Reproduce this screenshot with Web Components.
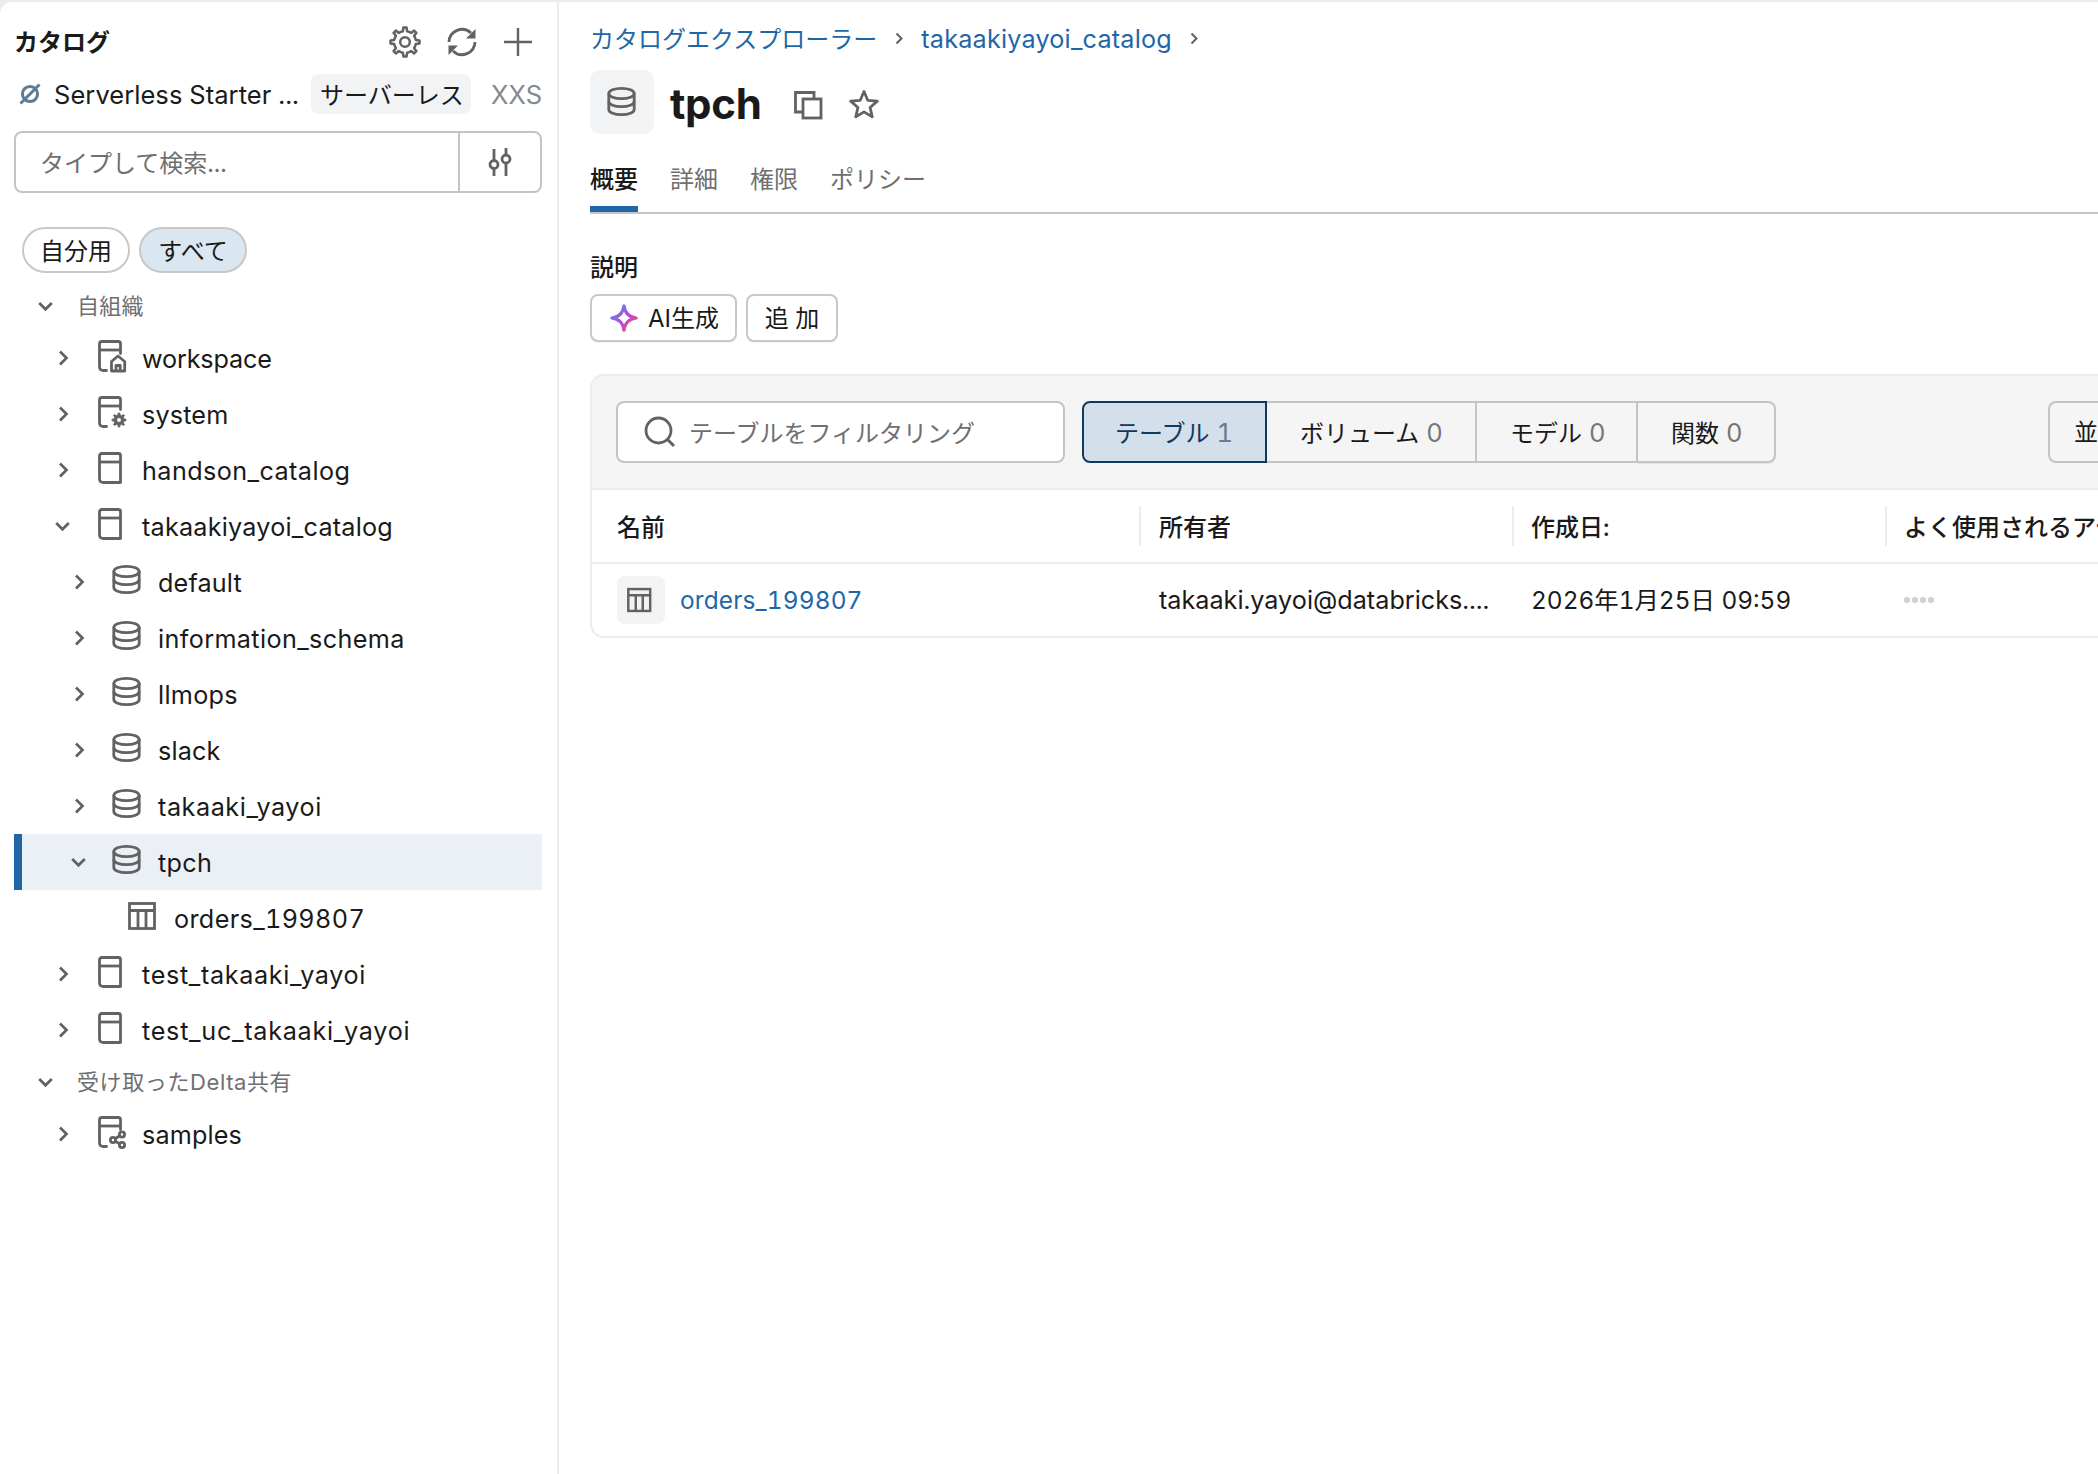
<!DOCTYPE html>
<html lang="ja">
<head>
<meta charset="utf-8">
<title>tpch</title>
<style>
html,body{margin:0;padding:0;height:100%;background:#fff;overflow:hidden}
</style>
</head>
<body>
<db-app>
  <db-sidebar slot="side">
    <side-header title-text="カタログ"></side-header>
    <cluster-row name="Serverless Starter ..." badge="サーバーレス" size="XXS"></cluster-row>
    <search-box placeholder="タイプして検索..."></search-box>
    <pill-group>
      <filter-pill>自分用</filter-pill>
      <filter-pill active>すべて</filter-pill>
    </pill-group>
    <tree-section first>自組織</tree-section>
    <tree-row depth="0" icon="catalog-home" style="--ls:-.15px">workspace</tree-row>
    <tree-row depth="0" icon="catalog-gear">system</tree-row>
    <tree-row depth="0" icon="catalog" style="--ls:.42px">handson_catalog</tree-row>
    <tree-row depth="0" icon="catalog" open style="--ls:.22px">takaakiyayoi_catalog</tree-row>
    <tree-row depth="1" icon="db">default</tree-row>
    <tree-row depth="1" icon="db" style="--ls:.37px">information_schema</tree-row>
    <tree-row depth="1" icon="db" style="--ls:.3px">llmops</tree-row>
    <tree-row depth="1" icon="db">slack</tree-row>
    <tree-row depth="1" icon="db" style="--ls:.55px">takaaki_yayoi</tree-row>
    <tree-row depth="1" icon="db" open selected style="--ls:.3px">tpch</tree-row>
    <tree-row depth="2" icon="table" leaf style="--ls:.35px">orders_199807</tree-row>
    <tree-row depth="0" icon="catalog" style="--ls:.65px">test_takaaki_yayoi</tree-row>
    <tree-row depth="0" icon="catalog" style="--ls:.72px">test_uc_takaaki_yayoi</tree-row>
    <tree-section wide>受け取ったDelta共有</tree-section>
    <tree-row depth="0" icon="catalog-share">samples</tree-row>
  </db-sidebar>
  <db-main slot="main">
    <bread-crumbs></bread-crumbs>
    <page-title>tpch</page-title>
    <tab-bar></tab-bar>
    <desc-block></desc-block>
    <asset-card></asset-card>
  </db-main>
</db-app>
<script>
(function(){
const INK='#626262';
function gear(cx,cy,R,r,n){
  let d='';
  const step=Math.PI*2/n;
  for(let i=0;i<n;i++){
    const a=i*step-Math.PI/2;
    const p=[[a-step*.5,r],[a-step*.24,r],[a-step*.14,R],[a+step*.14,R],[a+step*.24,r]];
    p.forEach((q,j)=>{
      const x=(cx+q[1]*Math.cos(q[0])).toFixed(2),y=(cy+q[1]*Math.sin(q[0])).toFixed(2);
      d+=(i===0&&j===0?'M':'L')+x+' '+y;
    });
  }
  return d+'Z';
}
function star(cx,cy,R,r){
  let d='';
  for(let i=0;i<10;i++){
    const a=-Math.PI/2+i*Math.PI/5,m=i%2?r:R;
    d+=(i?'L':'M')+(cx+m*Math.cos(a)).toFixed(2)+' '+(cy+m*Math.sin(a)).toFixed(2);
  }
  return d+'Z';
}
const S=`fill="none" stroke="${INK}" stroke-width="2.8"`;
const catalogBase='M3.5 10H24.5';
const ICONS={
  catalog:[32,`<path ${S} stroke-linejoin="round" d="M6 1.5H22.5Q24.5 1.5 24.5 3.5V30.5H7.5Q3.5 30.5 3.5 26.5V4Q3.5 1.5 6 1.5Z"/><path ${S} d="${catalogBase}"/>`],
  'catalog-home':[32,`<path ${S} stroke-linecap="round" d="M24.5 13.5V3.5Q24.5 1.5 22.5 1.5H6Q3.5 1.5 3.5 4V26.5Q3.5 30.5 7.5 30.5H10.5"/><path ${S} d="${catalogBase}"/><path ${S} stroke-linejoin="round" d="M15.5 31V21.5L22 16L28.7 21.5V31ZM20 31V25.5H24.2V31"/>`],
  'catalog-gear':[32,`<path ${S} stroke-linecap="round" d="M24.5 13.5V3.5Q24.5 1.5 22.5 1.5H6Q3.5 1.5 3.5 4V26.5Q3.5 30.5 7.5 30.5H10.5"/><path ${S} d="${catalogBase}"/><path fill="${INK}" stroke="${INK}" stroke-width="1" stroke-linejoin="round" fill-rule="evenodd" d="${gear(23,24,7,5,8)}M23 21.6a2.4 2.4 0 1 0 .01 0Z"/>`],
  'catalog-share':[32,`<path ${S} stroke-linecap="round" d="M24.5 13.5V3.5Q24.5 1.5 22.5 1.5H6Q3.5 1.5 3.5 4V26.5Q3.5 30.5 7.5 30.5H10.5"/><path ${S} d="${catalogBase}"/><circle ${S} cx="26" cy="18.5" r="2.6"/><circle ${S} cx="17" cy="24" r="2.6"/><circle ${S} cx="26" cy="29" r="2.6"/><path ${S} d="M19 22.7L23.8 19.8M19 25.2L23.8 27.8"/>`],
  db:[32,`<ellipse ${S} cx="14.5" cy="7.5" rx="12.7" ry="5.2"/><path ${S} d="M1.8 7.5V23.5C1.8 26.6 7.5 28.7 14.5 28.7S27.2 26.6 27.2 23.5V7.5"/><path ${S} d="M1.8 15.5C1.8 18.6 7.5 20.7 14.5 20.7S27.2 18.6 27.2 15.5"/>`],
  table:[32,`<rect ${S} x="1.5" y="3.5" width="25" height="25"/><path ${S} d="M1.5 10.5H26.5M10 10.5V28.5M18 10.5V28.5"/>`],
  gear:[32,`<path fill="none" stroke="${INK}" stroke-width="2.5" stroke-linejoin="round" d="${gear(16,16,14.6,11,8)}"/><circle cx="16" cy="16" r="4.8" fill="none" stroke="${INK}" stroke-width="2.5"/>`],
  refresh:[32,`<path ${S} d="M3 16A13 13 0 0 1 25 7M29 16A13 13 0 0 1 7 25"/><path fill="${INK}" d="M29.5 3V12.5H20Z M2.5 29V19.5H12Z"/>`],
  plus:[32,`<path fill="none" stroke="${INK}" stroke-width="2.4" d="M16 2V30M2 16H30"/>`],
  slash:[22,`<circle cx="11" cy="11" r="7.6" fill="none" stroke="#5f7a92" stroke-width="3"/><path stroke="#5f7a92" stroke-width="3" d="M1.5 20.5L20.5 1.5"/>`],
  filter:[32,`<path ${S} d="M10 3V14M10 23V30M22 2V8.5M22 17.5V30"/><circle ${S} cx="10" cy="18.5" r="4"/><circle ${S} cx="22" cy="13" r="4"/>`],
  search:[32,`<circle cx="14.5" cy="14.5" r="12.5" fill="none" stroke="${INK}" stroke-width="2.8"/><path stroke="${INK}" stroke-width="3" d="M23.5 23.5L30 30"/>`],
  copy:[30,`<path ${S} d="M10 22H2.5V2.5H21V9"/><rect ${S} x="10" y="9" width="18" height="19"/>`],
  star:[32,`<path ${S} stroke-linejoin="round" d="${star(16,16.5,14,6.4)}"/>`],
  spark:[32,`<defs><linearGradient id="g" x1="0" y1="0" x2="1" y2="1"><stop offset="0" stop-color="#4299e0"/><stop offset=".5" stop-color="#b44ae0"/><stop offset="1" stop-color="#ff4b5c"/></linearGradient></defs><path fill="none" stroke="url(#g)" stroke-width="3.4" stroke-linejoin="round" d="M16 3C17 11 21 15 29 16C21 17 17 21 16 29C15 21 11 17 3 16C11 15 15 11 16 3Z"/>`]
};
function staticEl(name,html){
  customElements.define(name,class extends HTMLElement{
    constructor(){super();this.attachShadow({mode:'open'}).innerHTML=html;}
  });
}
function dynEl(name,render){
  customElements.define(name,class extends HTMLElement{
    constructor(){super();this.attachShadow({mode:'open'});}
    connectedCallback(){this.shadowRoot.innerHTML=render(this);}
  });
}
dynEl('db-icon',h=>{
  const I=ICONS[h.getAttribute('name')]||ICONS.db,s=+(h.getAttribute('size')||I[0]);
  return `<style>:host{display:inline-flex;flex:none;width:${s}px;height:${s}px}svg{display:block;overflow:visible}</style><svg width="${s}" height="${s}" viewBox="0 0 ${I[0]} ${I[0]}">${I[1]}</svg>`;
});
dynEl('db-chevron',h=>{
  const open=h.hasAttribute('open');
  const d=open?'M2.2 3L8.5 9.3L14.8 3':'M3 1.5L9.5 8L3 14.5';
  return `<style>:host{display:inline-flex;width:${open?17:13}px;height:${open?12:16}px;flex:none}svg{display:block}</style><svg width="${open?17:13}" height="${open?12:16}"><path fill="none" stroke="${INK}" stroke-width="2.7" d="${d}"/></svg>`;
});
staticEl('db-app',`<style>
:host{display:flex;width:2098px;height:1474px;box-sizing:border-box;padding-top:2px;overflow:hidden;background:#e9edf1;color:#1a1a1a;font:24px/32px Inter,"Noto Sans CJK JP",sans-serif;font-variant-numeric:tabular-nums}
</style><slot name="side"></slot><slot name="main"></slot>`);
staticEl('db-sidebar',`<style>
:host{display:block;flex:none;width:559px;box-sizing:border-box;height:100%;padding:0 15px 0 14px;background:#fff;border-right:2px solid #e9edf1;border-top-left-radius:12px}
</style><slot></slot>`);
dynEl('side-header',h=>`<style>
:host{display:flex;align-items:center;height:40px;margin-top:20px}
h2{flex:1;margin:0;font-size:24px;font-weight:700;line-height:43px}
</style><h2>${h.getAttribute('title-text')}</h2><db-icon name="gear" size="32" style="margin-right:-1px"></db-icon><db-icon style="margin-left:26px" name="refresh" size="32"></db-icon><db-icon style="margin-left:24px" name="plus" size="32"></db-icon><span style="width:8px"></span>`);
dynEl('cluster-row',h=>`<style>
:host{display:flex;align-items:center;height:40px;margin-top:12px}
db-icon{margin-left:5px}
.n{margin-left:13px;width:257px;white-space:nowrap;font-size:25.5px;letter-spacing:.05px;line-height:43px}
.b{background:#f2f3f5;border-radius:8px;height:40px;line-height:43px;padding:0 9px;box-sizing:border-box;width:160px;text-align:center;white-space:nowrap}
.s{margin-left:auto;color:#85898d;font-size:25.5px;line-height:43px}
</style><db-icon name="slash" size="22"></db-icon><span class="n">${h.getAttribute('name')}</span><span class="b">${h.getAttribute('badge')}</span><span class="s">${h.getAttribute('size')}</span>`);
dynEl('search-box',h=>`<style>
:host{display:flex;align-items:stretch;height:62px;box-sizing:border-box;margin-top:17px;border:2px solid #c4c4c4;border-radius:8px}
.p{flex:1;padding-left:24px;line-height:61px;color:#6f6f6f}
.f{width:80px;border-left:2px solid #c4c4c4;display:flex;align-items:center;justify-content:center}
</style><span class="p">${h.getAttribute('placeholder')}</span><span class="f"><db-icon name="filter" size="32"></db-icon></span>`);
staticEl('pill-group',`<style>:host{display:flex;gap:9px;margin-top:34px;padding-left:8px}</style><slot></slot>`);
staticEl('filter-pill',`<style>
:host{display:block;width:108px;height:46px;box-sizing:border-box;border:2px solid #c8c8c8;border-radius:23px;text-align:center;line-height:45px;font-size:24px;background:#fff}
:host([active]){background:#dae6f0}
</style><slot></slot>`);
staticEl('tree-section',`<style>
:host{display:flex;align-items:center;height:48px;padding-left:23px;font-size:22px;color:#6f6f6f;white-space:nowrap}
:host([first]){margin-top:9px}
.t{margin-left:23px;line-height:34px;letter-spacing:.25px}
:host([wide]) .t{letter-spacing:.6px}
</style><db-chevron open></db-chevron><span class="t"><slot></slot></span>`);
dynEl('tree-row',h=>{
  const depth=+h.getAttribute('depth'),open=h.hasAttribute('open'),leaf=h.hasAttribute('leaf');
  const chev=leaf?'':`<db-chevron ${open?'open':''}></db-chevron>`;
  return `<style>
  :host{display:flex;align-items:center;height:56px;box-sizing:border-box;white-space:nowrap;padding-left:${35+depth*16}px}
  :host([selected]){background:#eaf0f6;box-shadow:inset 8px 0 0 #1f66a9}
  .c{width:28px;display:flex;justify-content:center;flex:none}
  .c db-chevron[open]{margin-left:-2px}
  db-icon{margin-left:19px;margin-bottom:4px}
  .t{margin-left:14px;font-size:25.2px;letter-spacing:var(--ls,.15px);line-height:34px;padding-top:1px}
  </style><span class="c">${chev}</span><db-icon name="${h.getAttribute('icon')}" size="32"></db-icon><span class="t"><slot></slot></span>`;
});
staticEl('db-main',`<style>
:host{display:block;flex:1;min-width:0;height:100%;box-sizing:border-box;padding-left:31px;background:#fff;overflow:hidden}
</style><slot></slot>`);
const crumb=`<svg width="8" height="13"><path fill="none" stroke="#626262" stroke-width="2" d="M1.5 1.5L6.5 6.5L1.5 11.5"/></svg>`;
staticEl('bread-crumbs',`<style>
:host{display:flex;align-items:center;height:36px;margin-top:18px;color:#1f66a9;white-space:nowrap;line-height:35px}
svg{display:block;margin:0 18px}
svg:last-child{margin-right:0}
span{padding-top:3px}
span.l{font-size:25.2px;letter-spacing:.2px;padding-top:2px}
</style><span>カタログエクスプローラー</span>${crumb}<span class="l">takaakiyayoi_catalog</span>${crumb}`);
staticEl('page-title',`<style>
:host{display:flex;align-items:center;height:64px;margin-top:14px}
.b{width:64px;height:64px;border-radius:10px;background:#f2f3f5;display:flex;align-items:center;justify-content:center}
.b db-icon{margin-left:2px}
h1{margin:0 31px 0 16px;font-size:42px;font-weight:700;line-height:68px;height:64px;letter-spacing:-.3px}
.i{margin-top:5px}
</style><span class="b"><db-icon name="db" size="32"></db-icon></span><h1><slot></slot></h1><db-icon class="i" name="copy" size="30"></db-icon><db-icon class="i" name="star" size="32" style="margin-left:25px"></db-icon>`);
staticEl('tab-bar',`<style>
:host{display:flex;gap:32px;height:66px;box-sizing:border-box;margin-top:14px;border-bottom:2px solid #c5c5c5;align-items:flex-start}
span{display:block;height:64px;box-sizing:border-box;padding-top:16px;color:#6f6f6f;line-height:32px}
.a{color:#1a1a1a;font-weight:500;border-bottom:6px solid #1f66a9}
</style><span class="a">概要</span><span>詳細</span><span>権限</span><span>ポリシー</span>`);
staticEl('desc-block',`<style>
:host{display:block}
.h{margin-top:38px;height:30px;line-height:31px;font-weight:500}
.r{display:flex;gap:9px;margin-top:12px}
.btn{display:flex;align-items:center;height:48px;box-sizing:border-box;border:2px solid #c8c8c8;border-radius:8px;padding:0 0 0 17px;line-height:35px;white-space:nowrap;background:#fff;box-shadow:0 1px 1px rgba(0,0,0,.05)}
.btn db-icon{margin-right:9px}
</style><div class="h">説明</div><div class="r"><span class="btn" style="width:147px"><db-icon name="spark" size="30"></db-icon>AI生成</span><span class="btn" style="width:92px;padding:0;justify-content:center">追&nbsp;加</span></div>`);
dynEl('seg-item',h=>`<style>
:host{display:block;height:62px;box-sizing:border-box;width:${h.getAttribute('w')}px;padding:0 0 0 33px;border:2px solid #c4c4c4;border-left-width:0;line-height:60px;white-space:nowrap;background:#f5f5f5}
:host(:last-child){border-radius:0 8px 8px 0;box-shadow:0 1px 1px rgba(0,0,0,.08)}
:host([active]){background:#d3dfea;border:2px solid #0f3a5f;border-radius:8px 0 0 8px;color:#0f3a5f;padding-left:31px}
.n{color:#777;margin-left:7px;font-size:25.5px}
:host([active]) .n{color:#6d7b88}
</style><slot></slot><span class="n">${h.getAttribute('count')}</span>`);
dynEl('asset-card',h=>`<style>
:host{display:block;width:1600px;height:264px;box-sizing:border-box;margin-top:32px;border:2px solid #e9edf1;border-radius:14px;overflow:hidden}
.bar{display:flex;height:114px;box-sizing:border-box;padding:25px 0 0 24px;background:#f5f5f5;border-bottom:2px solid #e9edf1}
.f{display:flex;align-items:center;width:449px;height:62px;box-sizing:border-box;background:#fff;border:2px solid #c4c4c4;border-radius:8px;padding-left:26px;color:#6f6f6f;margin-right:17px;white-space:nowrap}
.f db-icon{margin-right:13px}
.f span{padding-top:3px}
.seg{display:flex}
.sort{margin-left:272px;width:120px;height:62px;box-sizing:border-box;border:2px solid #c4c4c4;border-radius:8px;padding-left:24px;line-height:60px;white-space:nowrap;overflow:hidden;background:#f5f5f5}
.g{display:grid;grid-template-columns:547px 373px 373px 1fr;align-items:center;height:72px;border-bottom:2px solid #e9edf1;white-space:nowrap;font-weight:500}
.g.rw{height:72px;border:0;font-weight:400}
.c{padding-left:17px;height:40px;line-height:43px;border-left:2px solid #e9edf1}
.c:first-child{padding-left:25px;border:0}
.c:nth-child(2){padding-left:18px}
.rw .c{border-left-color:transparent;line-height:41px}
.nm{display:flex;align-items:center;height:48px;line-height:48px}
.b{width:48px;height:48px;border-radius:8px;background:#f2f3f5;display:flex;align-items:center;justify-content:center;margin-right:15px}
.lnk{color:#1f66a9;font-size:24.4px;letter-spacing:.15px}
.own{font-size:25.2px}
.dt{font-size:24.4px}
.dots{display:flex;gap:2px;align-items:center;height:40px}
.dots i{width:6px;height:6px;border-radius:50%;background:#cfcfcf;display:block}
.rw .c:first-child{height:48px}
</style>
<div class="bar">
  <div class="f"><db-icon name="search" size="32"></db-icon><span>テーブルをフィルタリング</span></div>
  <div class="seg">
    <seg-item active count="1" w="185">テーブル</seg-item><seg-item count="0" w="210">ボリューム</seg-item><seg-item count="0" w="161">モデル</seg-item><seg-item count="0" w="138">関数</seg-item>
  </div>
  <div class="sort">並べ替え</div>
</div>
<div class="g"><div class="c">名前</div><div class="c">所有者</div><div class="c">作成日:</div><div class="c">よく使用されるアセット</div></div>
<div class="g rw">
  <div class="c"><div class="nm"><span class="b"><db-icon name="table" size="28"></db-icon></span><span class="lnk">orders_199807</span></div></div>
  <div class="c own">takaaki.yayoi@databricks....</div>
  <div class="c dt">2026年1月25日 09:59</div>
  <div class="c"><div class="dots"><i></i><i></i><i></i><i></i></div></div>
</div>`);
})();
</script>
</body>
</html>
